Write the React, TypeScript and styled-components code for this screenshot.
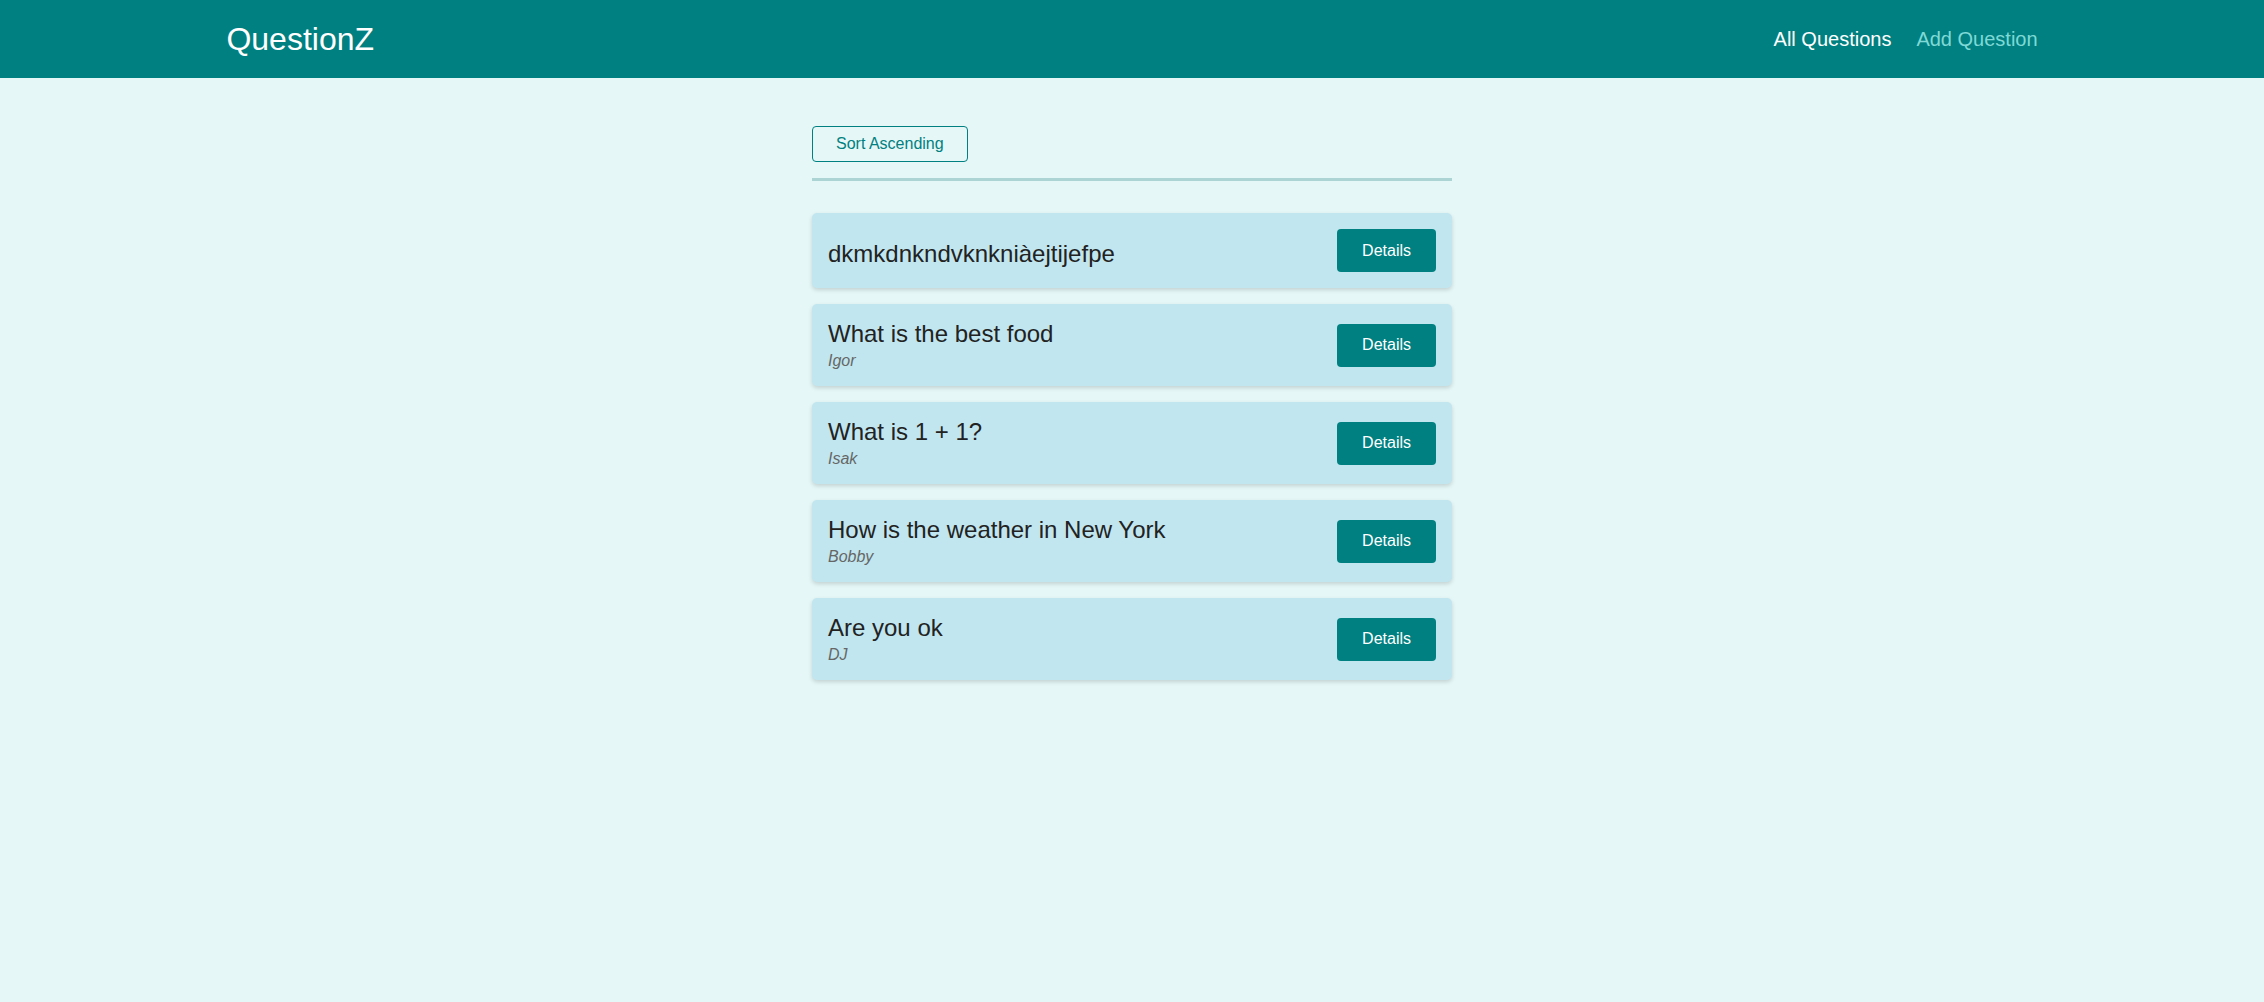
import { useState } from "react";
import styled, { createGlobalStyle } from "styled-components";

const GlobalStyle = createGlobalStyle`
    html, body {
        margin: 0;
        padding: 0;
        background: #e5f7f7;
        font-family: "Liberation Sans", Arial, sans-serif;
        min-height: 100%;
    }
    #root {
        min-height: 100vh;
        background: #e5f7f7;
    }
`

const Header = styled.header`
    background: #008080;
    height: 78px;
    display: flex;
    align-items: center;
`

const HeaderInner = styled.div`
    width: 80%;
    margin: 0 auto;
    display: flex;
    justify-content: space-between;
    align-items: center;
`

const Logo = styled.span`
    color: #ffffff;
    font-size: 32px;
    line-height: 1;
`

const Nav = styled.nav`
    display: flex;
    gap: 25px;
`

const NavLink = styled.a<{ $active?: boolean }>`
    font-size: 20px;
    color: ${(p) => (p.$active ? "#ffffff" : "#7fd9d6")};
    text-decoration: none;
    cursor: pointer;
`

const Main = styled.main`
    width: 640px;
    margin: 48px auto 0;
`

const SortButton = styled.button`
    font-family: inherit;
    font-size: 16px;
    line-height: 18px;
    color: #008080;
    background: transparent;
    border: 1px solid #008080;
    border-radius: 4px;
    padding: 8px 23px;
    cursor: pointer;
`

const Divider = styled.hr`
    border: none;
    height: 3px;
    background: #acd4d4;
    margin: 16px 0 32px;
`

const List = styled.div`
    display: flex;
    flex-direction: column;
    gap: 16px;
`

const Card = styled.div`
    background: #c1e6ef;
    border-radius: 5px;
    box-shadow: 0 2px 4px rgba(0, 0, 0, 0.15);
    padding: 16px;
    display: flex;
    justify-content: space-between;
    align-items: center;
`

const Info = styled.div<{ $solo?: boolean }>`
    display: flex;
    flex-direction: column;
    padding-top: ${(p) => (p.$solo ? "6px" : "0")};
`

const Title = styled.span`
    font-size: 24px;
    color: #222222;
`

const Author = styled.span`
    font-size: 16px;
    font-style: italic;
    color: #666666;
    margin-top: 4px;
`

const DetailsButton = styled.button`
    font-family: inherit;
    font-size: 16px;
    color: #ffffff;
    background: #008080;
    border: none;
    border-radius: 4px;
    padding: 12.5px 25px;
    cursor: pointer;
`

type Question = { title: string; author?: string };

const questions: Question[] = [
    { title: "dkmkdnkndvknkniàejtijefpe" },
    { title: "What is the best food", author: "Igor" },
    { title: "What is 1 + 1?", author: "Isak" },
    { title: "How is the weather in New York", author: "Bobby" },
    { title: "Are you ok", author: "DJ" },
];

export default function App() {
    const [ascending, setAscending] = useState(false);

    return (
        <>
            <GlobalStyle />
            <Header>
                <HeaderInner>
                    <Logo>QuestionZ</Logo>
                    <Nav>
                        <NavLink $active>All Questions</NavLink>
                        <NavLink>Add Question</NavLink>
                    </Nav>
                </HeaderInner>
            </Header>
            <Main>
                <SortButton onClick={() => setAscending(!ascending)}>
                    Sort Ascending
                </SortButton>
                <Divider />
                <List>
                    {questions.map((q) => (
                        <Card key={q.title}>
                            <Info $solo={!q.author}>
                                <Title>{q.title}</Title>
                                {q.author && <Author>{q.author}</Author>}
                            </Info>
                            <DetailsButton>Details</DetailsButton>
                        </Card>
                    ))}
                </List>
            </Main>
        </>
    )
}
